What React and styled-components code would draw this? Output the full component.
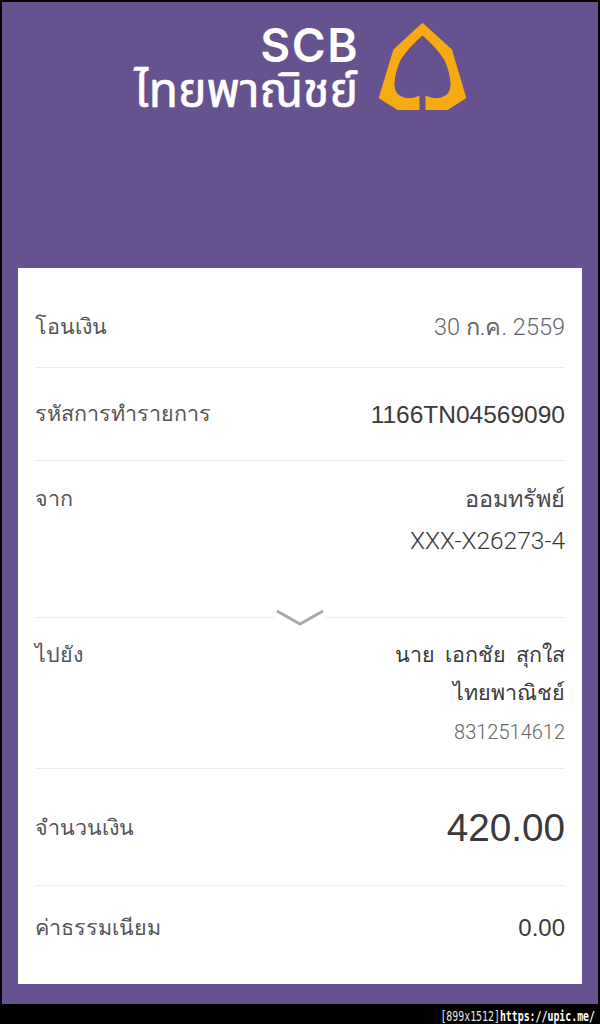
import React from "react";
import styled, { createGlobalStyle } from "styled-components";

const Global = createGlobalStyle`
  html, body { margin: 0; padding: 0; background: #000; }
  body { font-family: Roboto, "Liberation Sans", sans-serif; }
  * { box-sizing: border-box; }
`;

const Page = styled.div`
  width: 600px;
  height: 1024px;
  background: #000;
  display: flex;
  flex-direction: column;
  padding: 2px 2px 0;
`;

const Screen = styled.main`
  height: 1002px;
  background: #65528f;
  display: flex;
  flex-direction: column;
  padding: 0 16px;
`;

const Header = styled.header`
  height: 266px;
  display: flex;
  align-items: flex-start;
  padding: 20px 0 0 116px;
  gap: 20px;
`;

const LogoText = styled.div`
  width: 224px;
  display: flex;
  flex-direction: column;
  align-items: flex-end;
  color: #fff;
`;

const LogoLatin = styled.div`
  font-family: Inter, "Liberation Sans", sans-serif;
  font-size: 46px;
  font-weight: 600;
  line-height: 40px;
  letter-spacing: 1.5px;
  margin: 3px -1px 0 0;
`;

const LogoThai = styled.div`
  font-family: "Liberation Sans", "Noto Sans", "Noto Sans Thai", sans-serif;
  font-size: 48px;
  font-weight: 400;
  line-height: 42px;
  margin-top: 5px;
  -webkit-text-stroke: 0.7px #fff;
  white-space: nowrap;
`;

const EmblemMark = styled.svg`
  display: block;
  width: 89px;
  height: 89px;
  flex: none;
`;

const Card = styled.section`
  height: 716px;
  background: #fff;
  padding: 0 17px;
  display: flex;
  flex-direction: column;
`;

const Row = styled.div`
  position: relative;
  height: ${(p) => p.$h}px;
  padding: ${(p) => p.$top || 0}px 0 ${(p) => p.$bottom || 0}px;
  display: flex;
  justify-content: space-between;
  align-items: ${(p) => (p.$center ? "center" : "flex-start")};
  border-bottom: ${(p) => (p.$last ? "none" : "1px solid #ececec")};
`;

const Label = styled.div`
  font-size: 21.5px;
  line-height: 36px;
  color: #555;
  white-space: nowrap;
`;

const Values = styled.div`
  display: flex;
  flex-direction: column;
  align-items: flex-end;
`;

const Value = styled.div`
  font-size: ${(p) => p.$size || 24.5}px;
  line-height: ${(p) => p.$line || 36}px;
  color: ${(p) => p.$color || "#3a3a3a"};
  font-weight: ${(p) => p.$weight || 300};
  margin-top: ${(p) => p.$mt || 0}px;
  word-spacing: ${(p) => p.$words || 0}px;
  white-space: nowrap;
`;

const Figure = styled.div`
  font-family: "Liberation Sans", sans-serif;
  font-size: ${(p) => p.$size || 24}px;
  line-height: ${(p) => p.$line || 36}px;
  margin-top: ${(p) => p.$mt || 0}px;
  color: #3a3a3a;
  white-space: nowrap;
`;

const Chevron = styled.svg`
  position: absolute;
  left: 240px;
  bottom: -11px;
  width: 50px;
  height: 20px;
  background: #fff;
  display: block;
  z-index: 1;
`;

const Footer = styled.footer`
  flex: 1;
  display: flex;
  justify-content: flex-end;
  align-items: flex-start;
  padding: 3px 3px 0 0;
  color: #e6e6e6;
  font-family: "DejaVu Sans Mono", "Liberation Mono", monospace;
  font-size: 9.9px;
  line-height: 14px;
  white-space: nowrap;
`;

const FooterText = styled.div`
  transform: scaleY(1.35);
  transform-origin: top;
`;

const FooterLink = styled.span`
  color: #fff;
  font-weight: 700;
`;

const Emblem = () => (
  <EmblemMark viewBox="24 18 266 266" aria-hidden="true">
    <path
      fill="#f6ab12"
      d="M157 20 L245 100 L288 245 L232 281 L166 281 L166 238 Q190 250 215 243 Q240 235 241 205 Q240 170 222 130 Q195 90 157 58 Q119 90 92 130 Q74 170 73 205 Q74 235 99 243 Q124 250 148 238 L148 281 L82 281 L26 245 L70 100 Z"
    />
  </EmblemMark>
);

export default function App() {
  return (
    <>
      <Global />
      <Page>
        <Screen>
          <Header>
            <LogoText>
              <LogoLatin>SCB</LogoLatin>
              <LogoThai>ไทยพาณิชย์</LogoThai>
            </LogoText>
            <Emblem />
          </Header>
          <Card>
            <Row $h={100} $top={41}>
              <Label>โอนเงิน</Label>
              <Value $size={23.5} $color="#666">30 ก.ค. 2559</Value>
            </Row>
            <Row $h={93} $top={28}>
              <Label>รหัสการทำรายการ</Label>
              <Figure $size={24.5} $mt={1}>1166TN04569090</Figure>
            </Row>
            <Row $h={157} $top={20}>
              <Label>จาก</Label>
              <Values>
                <Value $size={23.5} $weight={400} $color="#4a4a4a">ออมทรัพย์</Value>
                <Value $mt={6}>XXX-X26273-4</Value>
              </Values>
              <Chevron viewBox="0 0 50 20" aria-hidden="true">
                <path d="M2 3 L25 16 L48 3" fill="none" stroke="#a9a9a9" strokeWidth="3" />
              </Chevron>
            </Row>
            <Row $h={151} $top={19}>
              <Label>ไปยัง</Label>
              <Values>
                <Value $size={21.5} $words={5}>นาย เอกชัย สุกใส</Value>
                <Value $size={21.5} $weight={400} $mt={2}>ไทยพาณิชย์</Value>
                <Value $size={20} $color="#666" $mt={3}>8312514612</Value>
              </Values>
            </Row>
            <Row $h={117} $center $top={2}>
              <Label>จำนวนเงิน</Label>
              <Figure $size={38.7} $line={48}>420.00</Figure>
            </Row>
            <Row $h={98} $center $last $bottom={14}>
              <Label>ค่าธรรมเนียม</Label>
              <Figure>0.00</Figure>
            </Row>
          </Card>
        </Screen>
        <Footer>
          <FooterText>[899x1512]<FooterLink>https://upic.me/</FooterLink></FooterText>
        </Footer>
      </Page>
    </>
  );
}
